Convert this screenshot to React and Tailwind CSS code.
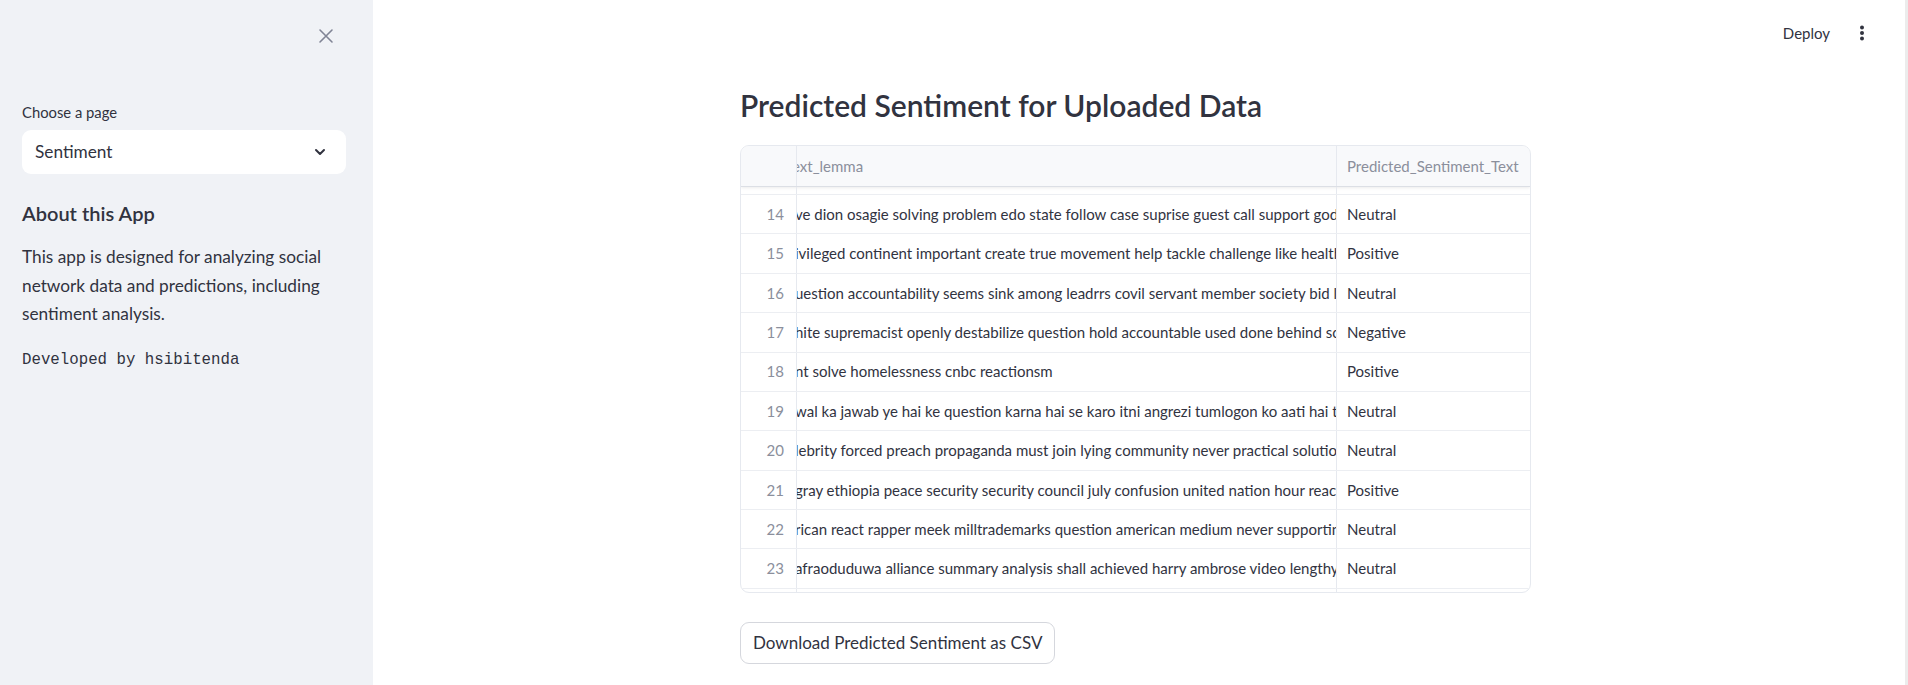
import React from "react";

const rows = [
  { id: 14, text: "ve dion osagie solving problem edo state follow case suprise guest call support godswill", label: "Neutral" },
  { id: 15, text: "ivileged continent important create true movement help tackle challenge like health", label: "Positive" },
  { id: 16, text: "uestion accountability seems sink among leadrrs covil servant member society bid la", label: "Neutral" },
  { id: 17, text: "hite supremacist openly destabilize question hold accountable used done behind scene", label: "Negative" },
  { id: 18, text: "nt solve homelessness cnbc reactionsm", label: "Positive" },
  { id: 19, text: "wal ka jawab ye hai ke question karna hai se karo itni angrezi tumlogon ko aati hai to", label: "Neutral" },
  { id: 20, text: "lebrity forced preach propaganda must join lying community never practical solution", label: "Neutral" },
  { id: 21, text: "gray ethiopia peace security security council july confusion united nation hour reaction", label: "Positive" },
  { id: 22, text: "rican react rapper meek milltrademarks question american medium never supporting", label: "Neutral" },
  { id: 23, text: "afraoduduwa alliance summary analysis shall achieved harry ambrose video lengthy", label: "Neutral" },
];

function Sidebar() {
  return (
    <aside className="w-[373px] shrink-0 bg-[#f0f2f6] pl-[22px] pr-[27px] text-[#31333f]">
      <div className="flex h-[72px] items-center justify-end pr-[12px]">
        <svg width="16" height="16" viewBox="0 0 16 16">
          <path d="M2 2L14 14M14 2L2 14" stroke="#808495" strokeWidth="1.6" strokeLinecap="round" />
        </svg>
      </div>
      <div className="mt-[30px] h-[20px] text-[14.8px] leading-[20px]">Choose a page</div>
      <div className="mt-[8px] flex h-[44px] items-center justify-between rounded-[9px] bg-white pl-[13px] pr-[18px]">
        <span className="text-[17.25px]">Sentiment</span>
        <svg width="16" height="16" viewBox="0 0 24 24">
          <path d="M6 9l6 6 6-6" fill="none" stroke="#31333f" strokeWidth="3" strokeLinecap="round" strokeLinejoin="round" />
        </svg>
      </div>
      <h3 className="mt-[25px] h-[28px] text-[20px] font-semibold leading-[28px]">About this App</h3>
      <p className="mt-[16px] text-[17.25px] leading-[28.6px]">
        This app is designed for analyzing social network data and predictions, including sentiment analysis.
      </p>
      <div className="mt-[19px] font-['Liberation_Mono',monospace] text-[15.75px] leading-[24px]">
        Developed by hsibitenda
      </div>
    </aside>
  );
}

function DataTable() {
  return (
    <div className="h-[448px] w-[791px] overflow-hidden rounded-[9px] border border-[#e6e9ef] text-[15px]">
      <div className="grid h-[41px] grid-cols-[55px_540px_1fr] border-b border-[#dcdfe5] bg-[#f8f9fb] text-[#8b8f9c] shadow-[0_1px_3px_rgba(0,0,0,0.08)]">
        <div />
        <div className="flex items-center overflow-hidden whitespace-nowrap border-l border-[#e6e9ef]">
          <span className="-ml-[5px]">ext_lemma</span>
        </div>
        <div className="flex items-center border-l border-[#e6e9ef] pl-[10px]">Predicted_Sentiment_Text</div>
      </div>
      <div className="grid h-[8px] grid-cols-[55px_540px_1fr] border-b border-[#eceef2]">
        <div />
        <div className="border-l border-[#e6e9ef]" />
        <div className="border-l border-[#e6e9ef]" />
      </div>
      {rows.map((r) => (
        <div key={r.id} className="grid h-[39.375px] grid-cols-[55px_540px_1fr] border-b border-[#eceef2] text-[#31333f]">
          <div className="flex items-center justify-end pr-[12px] text-[#8b8f9c]">{r.id}</div>
          <div className="flex items-center overflow-hidden whitespace-nowrap border-l border-[#e6e9ef]">
            <span className="-ml-[2px]">{r.text}</span>
          </div>
          <div className="flex items-center border-l border-[#e6e9ef] pl-[10px]">{r.label}</div>
        </div>
      ))}
      <div className="grid h-[20px] grid-cols-[55px_540px_1fr]">
        <div />
        <div className="border-l border-[#e6e9ef]" />
        <div className="border-l border-[#e6e9ef]" />
      </div>
    </div>
  );
}

export default function App() {
  return (
    <div className="flex h-[685px] w-[1908px] overflow-hidden bg-white font-['Lato',sans-serif] text-[#31333f]">
      <Sidebar />
      <main className="flex min-w-0 flex-1 flex-col">
        <div className="flex h-[66px] items-center justify-end gap-[29px] pr-[40px]">
          <span className="text-[15px]">Deploy</span>
          <svg width="6" height="16" viewBox="0 0 6 16">
            <circle cx="3" cy="2.5" r="2" fill="#31333f" />
            <circle cx="3" cy="8" r="2" fill="#31333f" />
            <circle cx="3" cy="13.5" r="2" fill="#31333f" />
          </svg>
        </div>
        <div className="ml-[367px] w-[791px]">
          <h2 className="mt-[21px] h-[37px] text-[30px] font-semibold leading-[37px]">
            Predicted Sentiment for Uploaded Data
          </h2>
          <div className="mt-[21px]">
            <DataTable />
          </div>
          <button className="mt-[29px] h-[42px] rounded-[9px] border border-[#d5d7dd] bg-white px-[12px] text-[17px]">
            Download Predicted Sentiment as CSV
          </button>
        </div>
      </main>
      <div className="w-[3px] shrink-0 bg-[#ececec]" />
    </div>
  );
}
